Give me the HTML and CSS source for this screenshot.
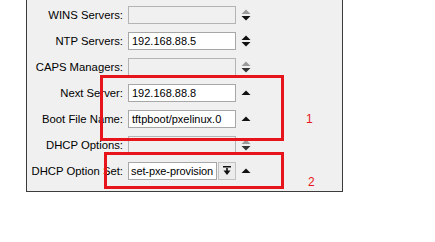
FILE: index.html
```html
<!DOCTYPE html>
<html>
<head>
<meta charset="utf-8">
<link rel="stylesheet" href="styles.css">
</head>
<body>
<div class="panel">
  <div class="row">
    <span class="label">WINS Servers:</span>
    <span class="field disabled"></span>
    <svg class="spin" width="10" height="14" viewBox="0 0 10 14"><path d="M0.5 6 L5 1.5 L9.5 6 Z" fill="#9a9a9a"/><path d="M0.5 8 L9.5 8 L5 12.5 Z" fill="#111"/></svg>
  </div>
  <div class="row">
    <span class="label">NTP Servers:</span>
    <span class="field">192.168.88.5</span>
    <svg class="spin" width="10" height="14" viewBox="0 0 10 14"><path d="M0.5 6 L5 1.5 L9.5 6 Z" fill="#111"/><path d="M0.5 8 L9.5 8 L5 12.5 Z" fill="#111"/></svg>
  </div>
  <div class="row">
    <span class="label">CAPS Managers:</span>
    <span class="field disabled"></span>
    <svg class="spin" width="10" height="14" viewBox="0 0 10 14"><path d="M0.5 6 L5 1.5 L9.5 6 Z" fill="#9a9a9a"/><path d="M0.5 8 L9.5 8 L5 12.5 Z" fill="#333"/></svg>
  </div>
  <div class="row">
    <span class="label">Next Server:</span>
    <span class="field">192.168.88.8</span>
    <svg class="spin" width="10" height="14" viewBox="0 0 10 14"><path d="M0.5 9 L5 4.5 L9.5 9 Z" fill="#111"/></svg>
  </div>
  <div class="row">
    <span class="label">Boot File Name:</span>
    <span class="field">tftpboot/pxelinux.0</span>
    <svg class="spin" width="10" height="14" viewBox="0 0 10 14"><path d="M0.5 9 L5 4.5 L9.5 9 Z" fill="#111"/></svg>
  </div>
  <div class="row">
    <span class="label">DHCP Options:</span>
    <span class="field disabled"></span>
    <svg class="spin" width="10" height="14" viewBox="0 0 10 14"><path d="M0.5 6 L5 1.5 L9.5 6 Z" fill="#9a9a9a"/><path d="M0.5 8 L9.5 8 L5 12.5 Z" fill="#333"/></svg>
  </div>
  <div class="row">
    <span class="label">DHCP Option Set:</span>
    <span class="combo">
      <span class="field short">set-pxe-provision</span>
      <span class="drop"><svg width="10" height="12" viewBox="0 0 10 12"><rect x="1" y="1" width="8" height="1.5" fill="#111"/><rect x="4.2" y="3" width="1.6" height="3" fill="#111"/><path d="M1.5 5.5 L8.5 5.5 L5 10 Z" fill="#111"/></svg></span>
    </span>
    <svg class="spin" width="10" height="14" viewBox="0 0 10 14"><path d="M0.5 9 L5 4.5 L9.5 9 Z" fill="#111"/></svg>
  </div>

  <div class="mark mark1"></div>
  <div class="mark mark2"></div>
  <span class="num num1">1</span>
  <span class="num num2">2</span>
</div>
</body>
</html>
```

FILE: styles.css
```css
html, body {
  margin: 0;
  padding: 0;
  background: #ffffff;
}

body {
  font-family: "Liberation Sans", Arial, sans-serif;
  font-size: 11px;
  color: #000;
}

.panel {
  position: relative;
  margin-left: 26px;
  width: 315px;
  background: #f0f0f0;
  border-left: 1px solid #3c3c3c;
  border-right: 1px solid #3c3c3c;
  border-bottom: 1px solid #3c3c3c;
  padding: 2px 0 7px 0;
  box-sizing: content-box;
}

.row {
  display: flex;
  align-items: center;
  height: 26px;
}

.label {
  width: 96px;
  text-align: right;
  white-space: nowrap;
  margin-right: 5px;
  font-size: 11.3px;
}

.field {
  display: flex;
  align-items: center;
  box-sizing: border-box;
  width: 108px;
  height: 18px;
  border: 1px solid #a7a7a7;
  background: #ffffff;
  padding-left: 3px;
  white-space: nowrap;
  overflow: hidden;
  font-size: 11px;
}

.field.disabled {
  background: #f0f0f0;
  border-color: #b4b4b4;
}

.combo {
  display: flex;
  align-items: center;
  width: 108px;
}

.field.short {
  width: 89px;
  padding-left: 2px;
  letter-spacing: -0.1px;
}

.drop {
  display: flex;
  align-items: center;
  justify-content: center;
  box-sizing: border-box;
  width: 18px;
  height: 18px;
  margin-left: 1px;
  border: 1px solid #c2c2c2;
  background: #ececec;
}

.spin {
  display: block;
  margin-left: 5px;
}

.mark {
  position: absolute;
  border: 3px solid #e8141c;
  box-sizing: border-box;
}

.mark1 {
  left: 73px;
  top: 75px;
  width: 184px;
  height: 66px;
}

.mark2 {
  left: 77px;
  top: 152px;
  width: 180px;
  height: 37px;
}

.num {
  position: absolute;
  color: #e8141c;
  font-size: 12px;
  line-height: 14px;
}

.num1 {
  left: 279px;
  top: 112px;
}

.num2 {
  left: 281px;
  top: 175px;
}
```
